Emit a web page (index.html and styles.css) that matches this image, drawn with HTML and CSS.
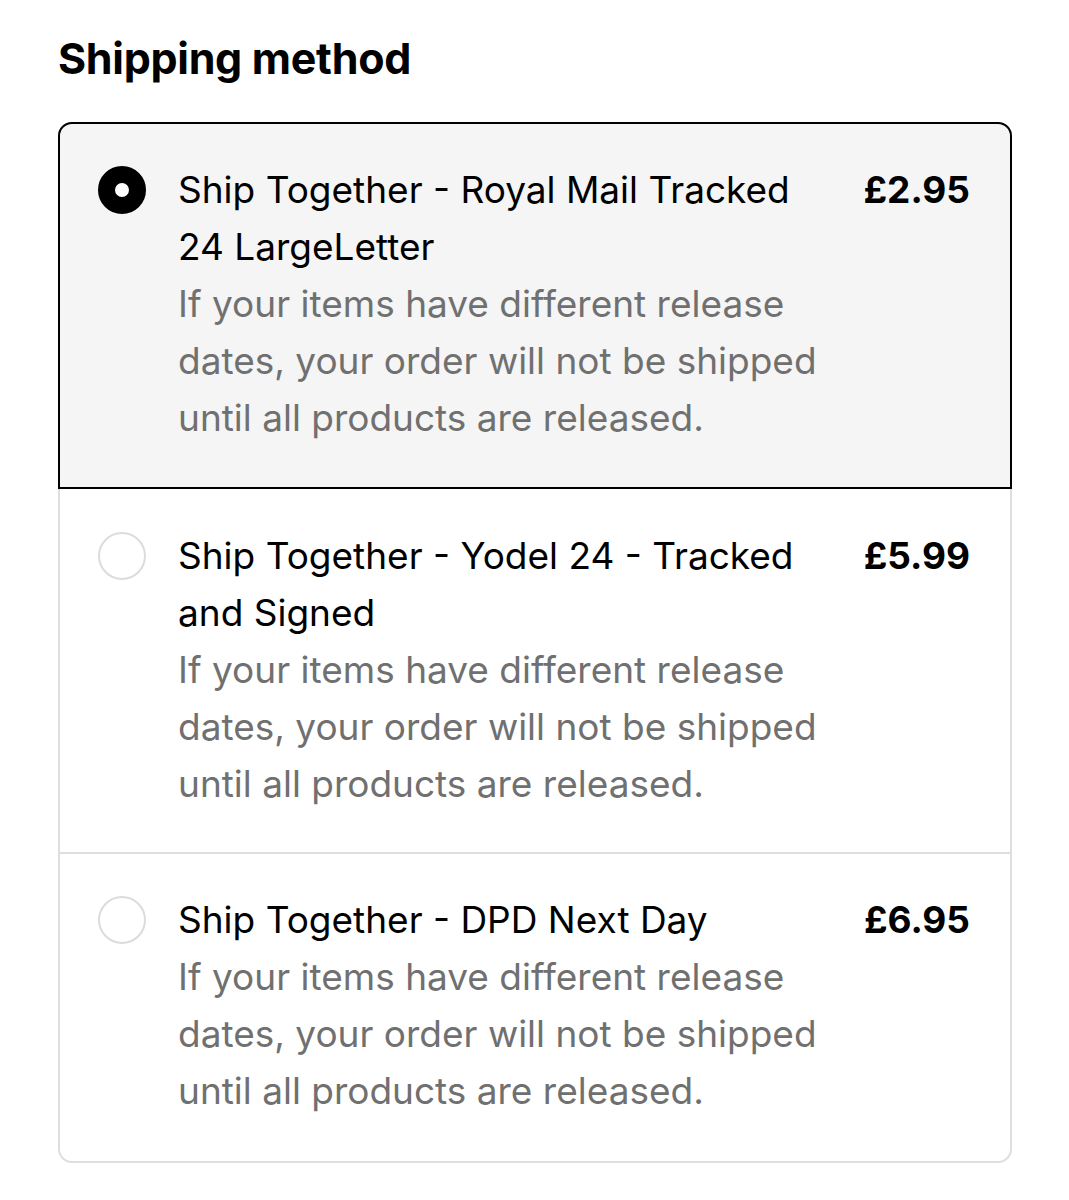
FILE: index.html
```html
<!DOCTYPE html>
<html lang="en">
<head>
<meta charset="utf-8">
<title>Shipping method</title>
<link rel="stylesheet" href="styles.css">
</head>
<body>
<main class="page">
  <h2 class="title">Shipping method</h2>
  <div class="card">
    <label class="option selected">
      <span class="radio"></span>
      <span class="info">
        <span class="name">Ship Together - Royal Mail Tracked 24 LargeLetter</span>
        <span class="desc">If your items have different release dates, your order will not be shipped until all products are released.</span>
      </span>
      <span class="price">£2.95</span>
    </label>
    <label class="option">
      <span class="radio"></span>
      <span class="info">
        <span class="name">Ship Together - Yodel 24 - Tracked and Signed</span>
        <span class="desc">If your items have different release dates, your order will not be shipped until all products are released.</span>
      </span>
      <span class="price">£5.99</span>
    </label>
    <label class="option">
      <span class="radio"></span>
      <span class="info">
        <span class="name">Ship Together - DPD Next Day</span>
        <span class="desc">If your items have different release dates, your order will not be shipped until all products are released.</span>
      </span>
      <span class="price">£6.95</span>
    </label>
  </div>
</main>
</body>
</html>
```

FILE: styles.css
```css
* { box-sizing: border-box; }
html, body { margin: 0; background: #fff; }
body {
  font-family: Inter, "Noto Sans", "Liberation Sans", sans-serif;
  color: #000;
}
.page {
  padding: 30px 57px 0 58px;
}
.title {
  margin: 0 0 36px;
  font-size: 43px;
  line-height: 56px;
  font-weight: 700;
  letter-spacing: -0.3px;
}
.card {
  border: 2px solid #dedede;
  border-radius: 14px;
  display: flex;
  flex-direction: column;
}
.option {
  display: flex;
  align-items: flex-start;
  gap: 32px;
  padding: 38px 40px 40px 38px;
  border-top: 2px solid #dedede;
  font-size: 37px;
  line-height: 57px;
}
.option:last-child { padding-top: 37px; padding-bottom: 42px; }
.option.selected {
  margin: -2px -2px 0;
  padding: 37px 40px 41px 38px;
  border: 2px solid #000;
  border-radius: 14px 14px 0 0;
  background: #f5f5f5;
}
.option.selected + .option { border-top: 0; padding-top: 38px; }
.radio {
  flex: none;
  width: 48px;
  height: 48px;
  margin-top: 5px;
  border-radius: 50%;
  border: 2px solid #dcdcdc;
  background: #fff;
}
.selected .radio {
  border: 17px solid #000;
  background: #fff;
}
.info {
  flex: 1;
  max-width: 652px;
  display: flex;
  flex-direction: column;
}
.name { color: #000; }
.desc { color: #707070; }
.price {
  flex: none;
  margin-left: auto;
  font-weight: 650;
}
```
